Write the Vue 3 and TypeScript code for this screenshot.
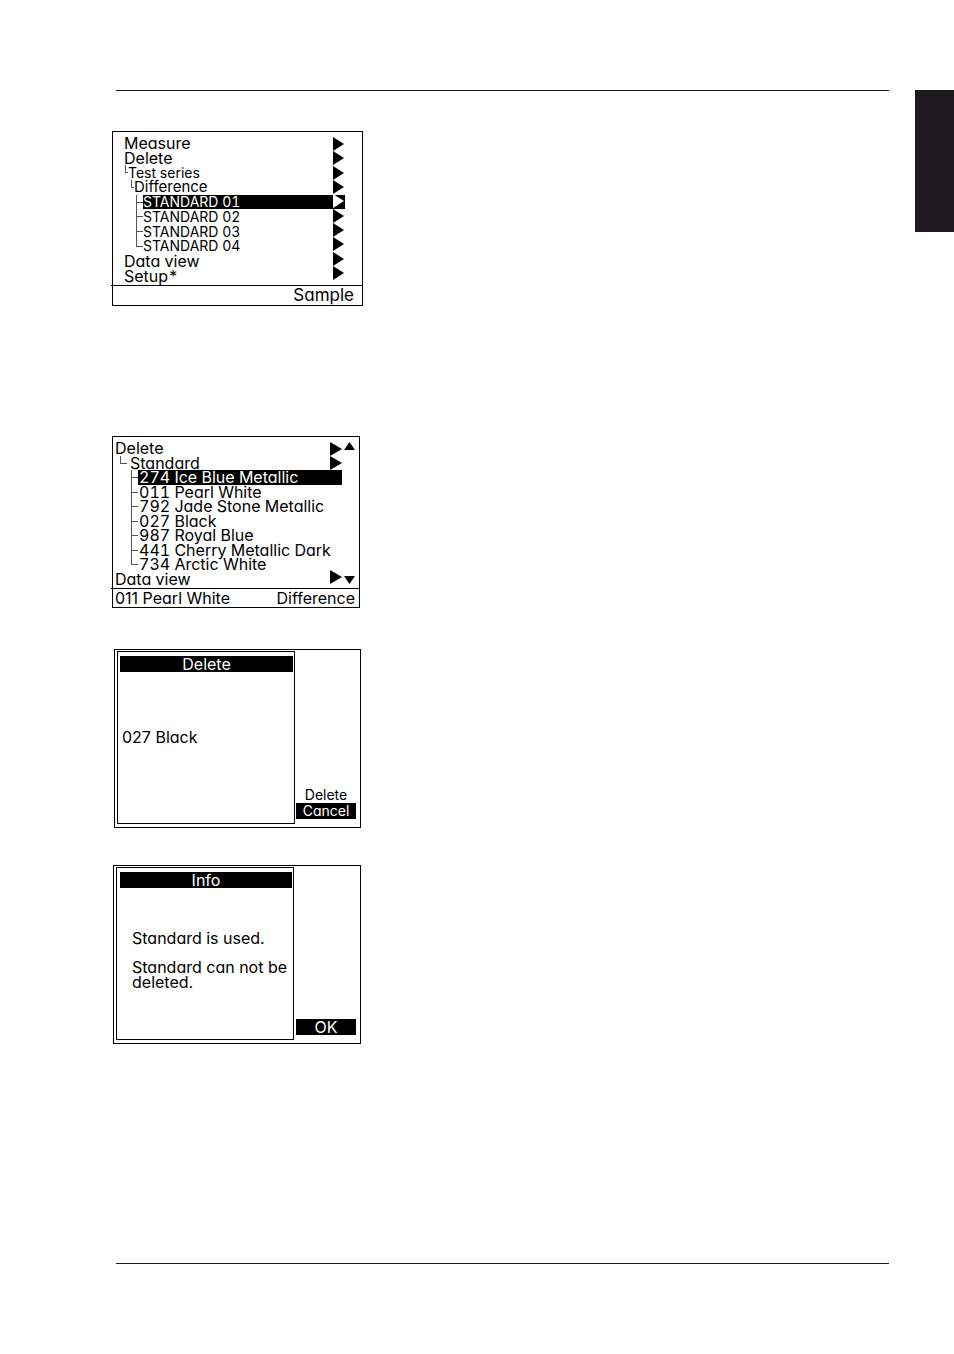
<script setup lang="ts">
interface Row {
  label: string
  kind: 'root' | 'corner' | 'corner2' | 'leaf'
  selected?: boolean
  last?: boolean
}

const seriesRows: Row[] = [
  { label: 'Measure', kind: 'root' },
  { label: 'Delete', kind: 'root' },
  { label: 'Test series', kind: 'corner' },
  { label: 'Difference', kind: 'corner2' },
  { label: 'STANDARD 01', kind: 'leaf', selected: true },
  { label: 'STANDARD 02', kind: 'leaf' },
  { label: 'STANDARD 03', kind: 'leaf' },
  { label: 'STANDARD 04', kind: 'leaf', last: true },
  { label: 'Data view', kind: 'root' },
  { label: 'Setup*', kind: 'root' },
]

const standardRows: Row[] = [
  { label: 'Delete', kind: 'root' },
  { label: 'Standard', kind: 'corner' },
  { label: '274 Ice Blue Metallic', kind: 'leaf', selected: true },
  { label: '011 Pearl White', kind: 'leaf' },
  { label: '792 Jade Stone Metallic', kind: 'leaf' },
  { label: '027 Black', kind: 'leaf' },
  { label: '987 Royal Blue', kind: 'leaf' },
  { label: '441 Cherry Metallic Dark', kind: 'leaf' },
  { label: '734 Arctic White', kind: 'leaf', last: true },
  { label: 'Data view', kind: 'root' },
]
</script>

<template>
  <div class="page">
    <main class="sheet">
      <hr class="rule" />
      <div class="figures">
        <section class="screen series" aria-label="Test series menu">
          <div class="body">
            <ul class="rows">
              <li v-for="row in seriesRows" :key="row.label" :class="[row.kind, { last: row.last }]">
                <span v-if="row.kind !== 'root'" class="branch"></span>
                <button type="button" :class="{ selected: row.selected }">{{ row.label }}</button>
              </li>
            </ul>
            <div class="arrows" aria-hidden="true">
              <svg v-for="row in seriesRows" :key="row.label" :class="{ light: row.selected }" viewBox="0 0 11 14">
                <path d="M0 0L11 7L0 14Z" />
              </svg>
            </div>
          </div>
          <footer><span></span><span>Sample</span></footer>
        </section>

        <section class="screen standards" aria-label="Standard menu">
          <div class="body">
            <ul class="rows">
              <li v-for="(row, i) in standardRows" :key="i" :class="[row.kind, { last: row.last }]">
                <span v-if="row.kind !== 'root'" class="branch"></span>
                <button type="button" :class="{ selected: row.selected }">{{ row.label }}</button>
              </li>
            </ul>
            <div class="side" aria-hidden="true">
              <div class="pair">
                <svg class="next" viewBox="0 0 12 14"><path d="M0 0L12 7L0 14Z" /></svg>
                <svg class="scroll" viewBox="0 0 11 8"><path d="M5.500 0L11 8H0Z" /></svg>
              </div>
              <svg class="next" viewBox="0 0 12 14"><path d="M0 0L12 7L0 14Z" /></svg>
              <div class="pair bottom">
                <svg class="next" viewBox="0 0 12 14"><path d="M0 0L12 7L0 14Z" /></svg>
                <svg class="scroll" viewBox="0 0 11 8"><path d="M0 0H11L5.500 8Z" /></svg>
              </div>
            </div>
          </div>
          <footer><span>011 Pearl White</span><span>Difference</span></footer>
        </section>

        <section class="screen dialog confirm" aria-label="Delete confirmation">
          <div class="pane">
            <h2>Delete</h2>
            <p>027 Black</p>
          </div>
          <div class="keys">
            <button type="button">Delete</button>
            <button type="button" class="selected">Cancel</button>
          </div>
        </section>

        <section class="screen dialog info" aria-label="Information">
          <div class="pane">
            <h2>Info</h2>
            <p>Standard is used.</p>
            <p>Standard can not be<br />deleted.</p>
          </div>
          <div class="keys">
            <button type="button" class="selected">OK</button>
          </div>
        </section>
      </div>
      <hr class="rule" />
    </main>
    <aside class="tab"></aside>
  </div>
</template>

<style>
body {
  margin: 0;
  background: #fff;
}
</style>

<style scoped>
.page {
  display: grid;
  grid-template-columns: 1fr 39px;
  column-gap: 26px;
  min-height: 100vh;
  padding: 90px 0;
  box-sizing: border-box;
  color: #000;
  font-family: Inter, "Liberation Sans", sans-serif;
  font-feature-settings: "cv11";
  font-size: 16px;
  font-weight: 400;
  line-height: 15px;
  white-space: nowrap;
}
.sheet {
  display: flex;
  flex-direction: column;
  justify-content: space-between;
}
.rule {
  width: auto;
  height: 1px;
  margin: 0 0 0 116px;
  border: 0;
  background: #1e191e;
}
.tab {
  height: 142px;
  background: #1e191e;
}
.figures {
  flex: 1;
  padding: 40px 0 0 112px;
}
.screen {
  box-sizing: border-box;
  border: 1px solid #000;
}
button {
  display: block;
  margin: 0;
  padding: 0;
  border: 0;
  background: none;
  color: inherit;
  font: inherit;
  font-feature-settings: inherit;
  text-align: left;
}
.selected {
  background: #000;
  color: #fff;
}
.body {
  display: grid;
}
.rows,
.arrows,
.side {
  grid-area: 1 / 1;
}
.rows {
  display: grid;
  grid-template-rows: repeat(10, 1fr);
  margin: 0;
  padding: 0;
  list-style: none;
  line-height: 14px;
  font-feature-settings: "cv11", "tnum";
}
.rows li {
  display: flex;
  align-items: stretch;
}
.rows .selected {
  flex: 1;
}
.branch {
  display: flex;
  flex-direction: column;
  flex: none;
  width: 7px;
}
.branch::before {
  content: "";
  height: 8px;
  border-left: 1px solid #555;
  border-bottom: 1px solid #555;
  box-sizing: border-box;
}
.leaf:not(.last) .branch::after {
  content: "";
  flex: 1;
  border-left: 1px solid #555;
}
.arrows {
  justify-self: end;
  display: flex;
  flex-direction: column;
  justify-content: space-between;
  height: 143px;
  margin: 1px 18px 0 0;
  z-index: 1;
}
svg {
  display: block;
  fill: #000;
}
.arrows svg {
  width: 11px;
  height: 14px;
}
.arrows .light {
  fill: #fff;
}
footer {
  display: flex;
  justify-content: space-between;
  align-items: center;
  margin-left: -2px;
  border-top: 1px solid #000;
}

.series {
  width: 251px;
  margin-bottom: 130px;
}
.series .body {
  padding: 4px 0 2px;
}
.series .rows {
  height: 147px;
  padding: 0 17px 0 11px;
}
.series .corner .branch {
  width: 3px;
  margin-left: 1px;
}
.series .corner2 .branch {
  width: 3px;
  margin-left: 7px;
}
.series .leaf .branch {
  margin-left: 12px;
}
.series .corner button,
.series .leaf button {
  font-size: 14px;
}
.series .corner2 button {
  font-size: 15px;
}
.series footer {
  height: 19px;
  padding: 0 8px;
  font-size: 17px;
}

.standards {
  width: 248px;
  margin-bottom: 41px;
}
.standards .body {
  padding: 4px 0 2px;
}
.standards .rows {
  height: 145px;
  padding: 0 17px 0 2px;
}
.standards .corner .branch {
  width: 7px;
  margin: 0 3px 0 5px;
}
.standards .leaf .branch {
  margin-left: 16px;
}
.standards .leaf button {
  padding-left: 1px;
}
.standards footer {
  height: 18px;
  padding: 0 4px;
}
.side {
  justify-self: end;
  width: 29px;
  display: flex;
  flex-direction: column;
  margin: 1px 0 2px;
}
.next {
  width: 12px;
  height: 14px;
}
.pair {
  display: flex;
  align-items: flex-start;
  gap: 2px;
}
.scroll {
  width: 11px;
  height: 8px;
}
.bottom {
  margin-top: auto;
  align-items: flex-end;
}

.dialog {
  display: flex;
  width: 247px;
  height: 179px;
}
.pane {
  box-sizing: border-box;
  flex: none;
  width: 178px;
  height: 173px;
  margin: 1px 0 0 2px;
  padding: 4px 1px 0 2px;
  border: 1px solid #000;
}
h2 {
  margin: 0;
  background: #000;
  color: #fff;
  font-size: 16px;
  font-weight: 400;
  line-height: 16px;
  text-align: center;
}
p {
  margin: 0;
}
.keys {
  display: flex;
  flex-direction: column;
  justify-content: flex-end;
  flex: 1;
  padding: 0 4px 8px 1px;
}
.keys button {
  text-align: center;
  line-height: 16px;
}
.confirm {
  margin: 0 0 37px 2px;
}
.confirm p {
  padding: 58px 0 0 2px;
}
.confirm .keys button {
  font-size: 14px;
}
.info {
  width: 248px;
  margin-left: 1px;
}
.info .pane {
  padding-left: 3px;
}
.info .keys {
  padding-left: 2px;
}
.info p {
  padding: 43px 0 0 12px;
}
.info p + p {
  padding-top: 14px;
}
</style>
